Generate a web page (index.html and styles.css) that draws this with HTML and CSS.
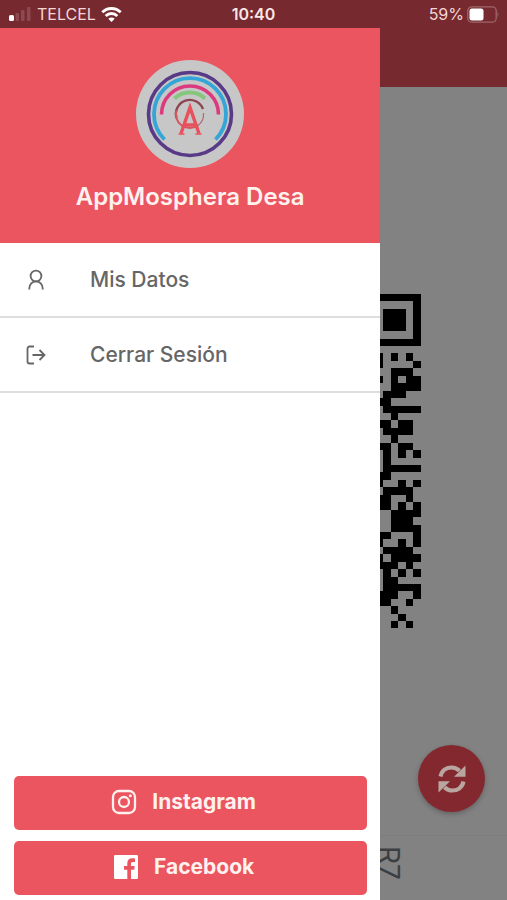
FILE: index.html
```html
<!DOCTYPE html>
<html lang="es">
<head>
  <meta charset="UTF-8">
  <meta name="viewport" content="width=device-width, initial-scale=1">
  <title>AppMosphera Desa</title>
  <link rel="stylesheet" href="styles.css">
</head>
<body>

<div class="app">
  <div class="status-bar">
    <div class="status-left">
      <svg class="signal" width="24" height="14" viewBox="0 0 24 14">
        <rect x="1" y="8" width="5" height="6" rx="1.500" fill="#fff"/>
        <rect x="7.500" y="6" width="3.500" height="8" rx="1" fill="#8c4a50"/>
        <rect x="13" y="3" width="3.500" height="11" rx="1" fill="#8c4a50"/>
        <rect x="19" y="0" width="3.500" height="14" rx="1" fill="#8c4a50"/>
      </svg>
      <span class="carrier">TELCEL</span>
      <svg class="wifi" width="21" height="15" viewBox="0 0 21 15" fill="none" stroke="#fff" stroke-width="2.800">
        <path d="M1.300 5.300a13 13 0 0 1 18.400 0"/>
        <path d="M4.700 8.900a8.200 8.200 0 0 1 11.600 0"/>
        <path d="M10.500 15L7.300 11.700a4.600 4.600 0 0 1 6.400 0z" fill="#fff" stroke="none"/>
      </svg>
    </div>
    <span class="clock">10:40</span>
    <div class="status-right">
      <span class="percent">59%</span>
      <svg class="battery" width="33" height="17" viewBox="0 0 33 17">
        <rect x="1.800" y="0.800" width="28.400" height="15.400" rx="4" fill="none" stroke="#9d666b" stroke-width="1.300"/>
        <rect x="3.500" y="2.500" width="14" height="12" rx="2.500" fill="#fff"/>
        <path d="M31.500 5.500q1.800 3 0 6z" fill="#9d666b"/>
      </svg>
    </div>
  </div>

  <div class="page-header"></div>

  <div class="page-content">
    <svg class="qr" viewBox="0 0 45 45" shape-rendering="crispEdges">
      <path id="qrModules" d=""/>
    </svg>
    <button class="refresh" aria-label="Actualizar">
      <svg width="30" height="30" viewBox="0 0 30 30">
        <path d="M3.500 12.500C5 6 10 3.500 14.500 3.500c3.500 0 6 1.300 8 3.300" fill="none" stroke="#b9a6a1" stroke-width="4.200"/>
        <path d="M28.500 1.500v11.300H17z" fill="#b9a6a1"/>
        <path d="M26.500 17.500C25 24 20 26.500 15.500 26.500c-3.500 0-6-1.300-8-3.300" fill="none" stroke="#b9a6a1" stroke-width="4.200"/>
        <path d="M1.500 28.500V17.200H13z" fill="#b9a6a1"/>
      </svg>
    </button>
  </div>

  <div class="page-footer">
    <span class="code">R7</span>
  </div>

  <div class="drawer">
    <div class="drawer-header">
      <svg class="logo" viewBox="0 0 108 108" fill="none">
        <circle cx="54" cy="54" r="54" fill="#c8c7c8"/>
        <circle cx="54" cy="54" r="41.500" stroke="#583a87" stroke-width="3.600"/>
        <path d="M28.500 79.500A36 36 0 1 1 79.500 79.500" stroke="#34a5d6" stroke-width="3.800"/>
        <path d="M25.500 54.500A28.500 28.500 0 0 1 82.500 54.500" stroke="#dc3a7e" stroke-width="3.600"/>
        <path d="M38.500 38.500A22.500 22.500 0 0 1 69 38.500" stroke="#86c67c" stroke-width="4"/>
        <path d="M40.500 58A14 14 0 0 1 67 49" stroke="#8a4650" stroke-width="2.400"/>
        <path d="M40.500 50A14 14 0 0 0 62 65.500" stroke="#d4565f" stroke-width="2"/>
        <path d="M62 65.500A14 14 0 0 0 67.500 53" stroke="#a66b70" stroke-width="1.200"/>
        <path d="M45 73.500L54 47.500L63 73.500M48 65H60" stroke="#e8505b" stroke-width="3.400"/>
        <path d="M42.500 74h6M59.500 74h6" stroke="#e8505b" stroke-width="1.500"/>
      </svg>
      <h1 class="app-name">AppMosphera Desa</h1>
    </div>

    <nav class="menu">
      <a class="menu-item" href="#">
        <svg class="menu-icon" width="20" height="24" viewBox="0 0 20 24">
          <circle cx="10" cy="8" r="5.400"/>
          <path d="M3.300 21.500v-1.300c0-4 3-6.800 6.700-6.800s6.700 2.800 6.700 6.800v1.300"/>
        </svg>
        <span>Mis Datos</span>
      </a>
      <a class="menu-item" href="#">
        <svg class="menu-icon" width="20" height="24" viewBox="0 0 20 24">
          <path d="M8 3.500H3.500a2 2 0 0 0-2 2v13a2 2 0 0 0 2 2H8M6.500 12H18M13.500 7l5 5-5 5"/>
        </svg>
        <span>Cerrar Sesión</span>
      </a>
    </nav>

    <div class="social">
      <button class="social-button">
        <svg width="26" height="26" viewBox="0 0 26 26" fill="none" stroke="#fff1ee" stroke-width="2.300">
          <rect x="2" y="2" width="22" height="22" rx="6"/>
          <circle cx="13" cy="13" r="5"/>
          <circle cx="19.300" cy="6.800" r="1.500" fill="#fff1ee" stroke="none"/>
        </svg>
        Instagram
      </button>
      <button class="social-button">
        <svg width="26" height="26" viewBox="0 0 26 26">
          <path d="M2.300 1h21.400q1.300 0 1.300 1.300v21.400q0 1.300-1.300 1.300H18v-9.300h3.200l.5-3.700H18V9.700c0-1.100.4-1.800 1.900-1.800H22V4.500c-.5-.1-1.600-.2-2.800-.2-2.900 0-4.900 1.800-4.900 5V12H11v3.700h3.300V25H2.300Q1 25 1 23.700V2.300Q1 1 2.300 1z" fill="#fff"/>
        </svg>
        Facebook
      </button>
    </div>
  </div>
</div>

<script src="qr.js"></script>

</body>
</html>
```

FILE: styles.css
```css
* {
  box-sizing: border-box;
}

body {
  margin: 0;
  font-family: Inter, "Liberation Sans", sans-serif;
  background-color: #828282;
}

.app {
  position: relative;
  display: flex;
  flex-direction: column;
  min-height: 100vh;
  overflow: hidden;
}

.status-bar {
  display: grid;
  grid-template-columns: 1fr auto 1fr;
  align-items: center;
  height: 28px;
  padding: 0 8px;
  background-color: #76292f;
  color: #f3d6d6;
  font-size: 16px;
}

.status-left,
.status-right {
  display: flex;
  align-items: center;
  gap: 5px;
}

.status-right {
  justify-content: flex-end;
  gap: 2px;
}

.clock {
  font-weight: 600;
  color: #fbe6e4;
}

.page-header {
  height: 59px;
  background-color: #76292f;
}

.page-content {
  position: relative;
  flex: 1;
  display: flex;
  align-items: center;
  justify-content: center;
}

.qr {
  width: 66%;
}

.refresh {
  position: absolute;
  right: 22px;
  bottom: 23px;
  display: flex;
  align-items: center;
  justify-content: center;
  width: 67px;
  height: 67px;
  padding: 0;
  border: none;
  border-radius: 50%;
  background-color: #84282f;
  box-shadow: 0 2px 5px rgba(0, 0, 0, 0.25);
  cursor: pointer;
}

.page-footer {
  height: 65px;
  padding: 10px 0 0 75%;
  border-top: 1px solid #7d7d7d;
}

.code {
  display: block;
  writing-mode: vertical-rl;
  font-size: 28px;
  line-height: 18px;
  color: #3c3f42;
}

.drawer {
  position: absolute;
  top: 28px;
  bottom: 0;
  left: 0;
  display: flex;
  flex-direction: column;
  width: 75%;
  background-color: #fff;
}

.drawer-header {
  display: flex;
  flex-direction: column;
  align-items: center;
  gap: 14px;
  padding: 32px 16px;
  background-color: #eb5560;
}

.logo {
  width: 108px;
  height: 108px;
}

.app-name {
  margin: 0;
  font-size: 24px;
  font-weight: 600;
  line-height: 29px;
  color: #fff1ee;
}

.menu {
  flex: 1;
}

.menu-item {
  display: flex;
  align-items: center;
  gap: 44px;
  height: 75px;
  padding: 0 26px;
  border-bottom: 2px solid #dedede;
  font-size: 21px;
  font-weight: 500;
  color: #666;
  text-decoration: none;
}

.menu-icon {
  fill: none;
  stroke: #666;
  stroke-width: 1.800;
}

.social {
  display: flex;
  flex-direction: column;
  gap: 11px;
  padding: 5px 13px 5px 14px;
}

.social-button {
  display: flex;
  align-items: center;
  justify-content: center;
  gap: 15px;
  height: 54px;
  padding: 0 20px 3px 6px;
  border: none;
  border-radius: 5px;
  background-color: #eb5560;
  color: #fff1ee;
  font-family: inherit;
  font-size: 21px;
  font-weight: 700;
  cursor: pointer;
}
```

FILE: qr.js
```js
// right edge of the code, the rest stays under the open drawer
const firstColumn = 39;
const rows = [
  '111111', '000001', '011101', '011101', '011101', '000001', '111111',
  '000000', '101010', '100001', '001110', '101011', '001111', '011100',
  '110000', '011111', '001000', '110110', '011110', '001000', '110110',
  '010101', '010000', '011111', '110000', '100101', '011110', '110010',
  '110101', '001111', '001110', '001111', '110001', '100101', '011110',
  '101111', '111010', '010101', '011000', '011111', '111001', '110010',
  '001000', '000100', '001010'
];

let path = '';
rows.forEach((row, y) => {
  [...row].forEach((cell, i) => {
    if (cell === '1') path += `M${firstColumn + i} ${y}h1v1h-1z`;
  });
});
document.getElementById('qrModules').setAttribute('d', path);
```
